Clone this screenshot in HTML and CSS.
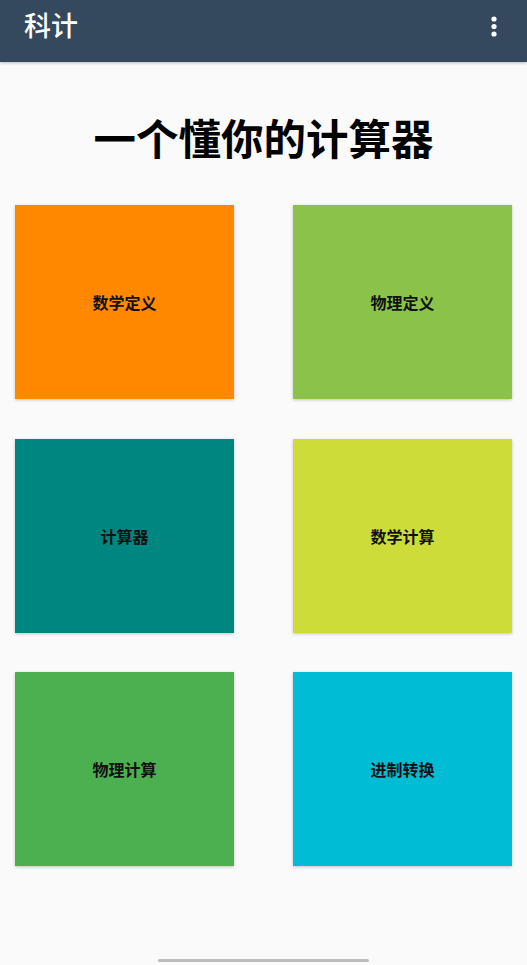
FILE: index.html
```html
<!DOCTYPE html>
<html lang="zh">
<head>
<meta charset="utf-8">
<title>科计</title>
<link rel="stylesheet" href="styles.css">
</head>
<body>
<header class="appbar">
  <span class="appbar-title">科计</span>
  <svg class="menu" width="10" height="24" viewBox="0 0 10 24">
    <circle cx="5" cy="5" r="2.6" fill="#fff"/>
    <circle cx="5" cy="12.5" r="2.6" fill="#fff"/>
    <circle cx="5" cy="20" r="2.6" fill="#fff"/>
  </svg>
</header>
<main class="content">
  <h1 class="headline">一个懂你的计算器</h1>
  <div class="grid">
    <div class="card orange">数学定义</div>
    <div class="card lightgreen">物理定义</div>
    <div class="card teal">计算器</div>
    <div class="card lime">数学计算</div>
    <div class="card green">物理计算</div>
    <div class="card cyan">进制转换</div>
  </div>
</main>
<div class="navbar"><span class="handle"></span></div>
</body>
</html>
```
FILE: styles.css
```css
html, body {
  margin: 0;
  padding: 0;
}
body {
  width: 527px;
  height: 965px;
  background: #fafafa;
  font-family: "Noto Sans CJK SC", "Noto Sans", sans-serif;
  position: relative;
  overflow: hidden;
}
.appbar {
  height: 62px;
  background: #34495e;
  display: flex;
  align-items: center;
  justify-content: space-between;
  padding: 0 28px 0 24px;
  box-sizing: border-box;
  box-shadow: 0 1px 3px rgba(0,0,0,0.25);
}
.appbar-title {
  color: #fff;
  font-size: 27px;
  font-weight: 500;
  line-height: 36px;
  margin-top: -12px;
}
.menu {
  margin-top: -10px;
}
.content {
  display: flex;
  flex-direction: column;
  align-items: center;
}
.headline {
  margin: 48px 0 0;
  font-size: 42.5px;
  font-weight: 700;
  line-height: 54px;
  color: #000;
}
.grid {
  margin-top: 41px;
  display: grid;
  grid-template-columns: 219px 219px;
  grid-auto-rows: 194px;
  column-gap: 59px;
  row-gap: 39.5px;
}
.card {
  display: flex;
  align-items: center;
  justify-content: center;
  font-size: 16px;
  font-weight: 700;
  color: #111;
  box-shadow: 0 1px 3px rgba(0,0,0,0.22);
}
.orange { background: #ff8800; }
.lightgreen { background: #8bc34a; }
.teal { background: #008681; }
.lime { background: #cddc39; }
.green { background: #4caf50; }
.cyan { background: #00bcd4; }
.navbar {
  position: absolute;
  left: 0;
  right: 0;
  bottom: 0;
  height: 6px;
  display: flex;
  justify-content: center;
}
.handle {
  width: 211px;
  height: 3px;
  border-radius: 2px;
  background: #bdbdbd;
}
```
